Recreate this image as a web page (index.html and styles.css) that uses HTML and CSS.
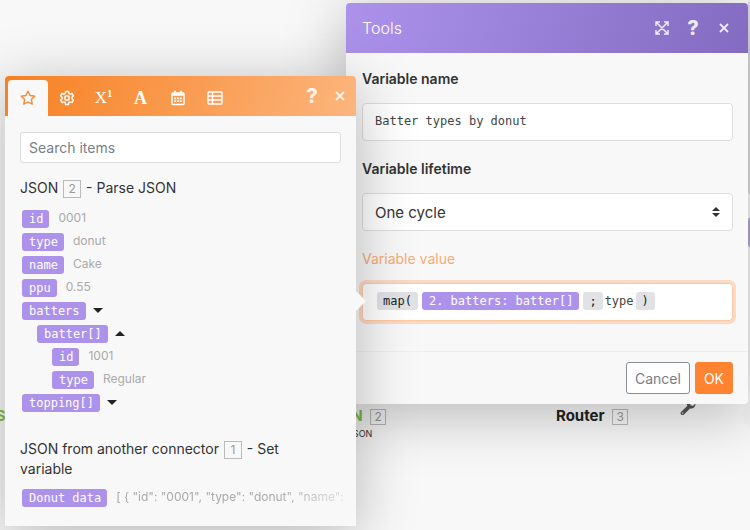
FILE: index.html
```html
<!DOCTYPE html>
<html lang="en">
  <head>
    <meta charset="UTF-8" />
    <meta name="viewport" content="width=device-width, initial-scale=1.0" />
    <title>Scenario editor</title>
    <link rel="stylesheet" href="styles.css">
  </head>

  <body>
    <main class="canvas">
      <!-- scenario modules behind the windows -->
      <div class="module module-first">
        <div class="module-name json">JS</div>
      </div>
      <div class="module module-parse">
        <div class="module-name json">JSON <span class="badge">2</span></div>
        <div class="module-sub">Parse JSON</div>
      </div>
      <div class="module module-router">
        <div class="module-name">Router <span class="badge">3</span></div>
      </div>
      <svg class="wrench" width="16" height="16" viewBox="0 0 16 16">
        <path d="M15.400 3.600l-2.500 2.300-2.400-.6-.5-2.200L12.400.7C10.500.1 8.500.7 7.500 2.300c-.7 1.200-.7 2.500-.2 3.700L1.200 11.700c-.9.9-.9 2 0 2.800s2 .8 2.800 0L10 8.600c1.400.4 2.900 0 4-1 1.200-1.100 1.700-2.600 1.400-4z" fill="#555" />
        <circle cx="2.700" cy="13" r=".8" fill="#ddd" />
      </svg>
      <div class="circle circle-top"></div>
      <div class="circle circle-tools"></div>
      <div class="circle circle-bottom"></div>

      <section class="window tools">
        <header class="tools-head">
          <h1>Tools</h1>
          <button type="button" class="icon-btn" aria-label="Expand">
            <svg width="14" height="14" viewBox="0 0 14 14" fill="none" stroke="currentColor" stroke-width="1.500">
              <path d="M1 5V1h4M9 1h4v4M13 9v4H9M5 13H1V9M1.500 1.500l11 11M12.500 1.500l-11 11" />
            </svg>
          </button>
          <button type="button" class="icon-btn help" aria-label="Help">?</button>
          <button type="button" class="icon-btn" aria-label="Close">
            <svg width="10" height="10" viewBox="0 0 10 10" stroke="currentColor" stroke-width="1.800">
              <path d="M1 1l8 8M9 1L1 9" />
            </svg>
          </button>
        </header>

        <form class="tools-body" id="tools-form">
          <div class="field">
            <label for="var-name">Variable name</label>
            <input type="text" id="var-name" class="control mono" value="Batter types by donut" />
          </div>
          <div class="field">
            <label for="var-life">Variable lifetime</label>
            <div class="select-wrap">
              <select id="var-life" class="control">
                <option>One cycle</option>
                <option>One execution</option>
              </select>
              <svg class="select-arrows" width="8" height="10" viewBox="0 0 8 10" fill="#333">
                <path d="M0 4l4-4 4 4zM0 6h8l-4 4z" />
              </svg>
            </div>
          </div>
          <div class="field active">
            <label id="value-label">Variable value</label>
            <div class="control mono expression" role="textbox" contenteditable="true" spellcheck="false" aria-labelledby="value-label"><span class="fn">map(</span><span class="pill">2. batters: batter[]</span><span class="fn">;</span><span class="plain">type</span><span class="fn">)</span></div>
          </div>
        </form>

        <footer class="tools-foot">
          <button type="button" class="btn">Cancel</button>
          <button type="submit" form="tools-form" class="btn primary">OK</button>
        </footer>
      </section>

      <section class="window picker">
        <header class="picker-head">
          <button type="button" class="tab selected" aria-label="Items">
            <svg width="16" height="16" viewBox="0 0 16 16" fill="none" stroke="currentColor" stroke-width="1.400" stroke-linejoin="round">
              <path d="M8 1.200l2.100 4.300 4.700.7-3.400 3.300.8 4.700L8 12l-4.200 2.200.8-4.700L1.200 6.200l4.700-.7z" />
            </svg>
          </button>
          <button type="button" class="tab" aria-label="General functions">
            <svg width="16" height="16" viewBox="0 0 16 16" fill="none" stroke="currentColor" stroke-width="1.500" stroke-linejoin="round">
              <path d="M6.600 1.400h2.800l.4 1.900 1.300.8 1.900-.7 1.400 2.500-1.500 1.300v1.600l1.500 1.300-1.400 2.500-1.900-.7-1.300.8-.4 1.900H6.600l-.4-1.900-1.300-.8-1.900.7-1.400-2.500 1.500-1.300V7.200L1.600 5.900 3 3.400l1.900.7 1.300-.8z" />
              <circle cx="8" cy="8" r="2.200" />
            </svg>
          </button>
          <button type="button" class="tab serif" aria-label="Math functions">X<sup>1</sup></button>
          <button type="button" class="tab serif letter" aria-label="Text functions">A</button>
          <button type="button" class="tab" aria-label="Date functions">
            <svg width="14" height="16" viewBox="0 0 14 16" fill="none" stroke="currentColor" stroke-width="1.500">
              <rect x="1" y="3" width="12" height="11.500" rx="1" />
              <path d="M1 4.500h12" stroke-width="2.500" />
              <path d="M4 .8V3M10 .8V3" stroke-width="1.800" />
              <path d="M3.200 8.300h2M6 8.300h2M8.800 8.300h2M3.200 11.200h2M6 11.200h2M8.800 11.200h2" stroke-width="1.800" />
            </svg>
          </button>
          <button type="button" class="tab" aria-label="Array functions">
            <svg width="16" height="14" viewBox="0 0 16 14" fill="none" stroke="currentColor" stroke-width="1.400">
              <rect x="1" y="1" width="14" height="12" rx="1" />
              <path d="M5.500 1v12M1 5h14M1 9h14" />
            </svg>
          </button>
          <button type="button" class="icon-btn help push" aria-label="Help">?</button>
          <button type="button" class="icon-btn" aria-label="Close">
            <svg width="10" height="10" viewBox="0 0 10 10" stroke="currentColor" stroke-width="1.800">
              <path d="M1 1l8 8M9 1L1 9" />
            </svg>
          </button>
        </header>

        <div class="picker-body">
          <input type="search" class="search" placeholder="Search items" aria-label="Search items" />

          <h2>JSON <span class="badge">2</span> - Parse JSON</h2>
          <ul class="items">
            <li><span class="pill">id</span><span class="sample">0001</span></li>
            <li><span class="pill">type</span><span class="sample">donut</span></li>
            <li><span class="pill">name</span><span class="sample">Cake</span></li>
            <li><span class="pill">ppu</span><span class="sample">0.55</span></li>
            <li><span class="pill">batters</span><span class="caret"></span></li>
            <li class="level-1"><span class="pill">batter[]</span><span class="caret up"></span></li>
            <li class="level-2"><span class="pill">id</span><span class="sample">1001</span></li>
            <li class="level-2"><span class="pill">type</span><span class="sample">Regular</span></li>
            <li><span class="pill">topping[]</span><span class="caret"></span></li>
          </ul>

          <h2 class="next">JSON from another connector <span class="badge">1</span> - Set variable</h2>
          <ul class="items">
            <li><span class="pill">Donut data</span><span class="sample fade">[ { "id": "0001", "type": "donut", "name":</span></li>
          </ul>
        </div>
      </section>
    </main>
  </body>
</html>
```

FILE: styles.css
```css
* {
  box-sizing: border-box;
}

body {
  margin: 0;
  font-family: Inter, "Liberation Sans", sans-serif;
  font-size: 14px;
  color: #333;
  background: #f8f8f8;
}

button,
input,
select {
  font: inherit;
  color: inherit;
}

.canvas {
  position: relative;
  min-height: 100vh;
  overflow: hidden;
}

.window {
  position: absolute;
  background: #f8f8f8;
  border-radius: 4px;
  box-shadow: 0 10px 60px rgba(0, 0, 0, 0.27);
}

.mono,
.pill {
  font-family: "DejaVu Sans Mono", "Liberation Mono", monospace;
  font-size: 12px;
}

.mono {
  color: #444;
}

.pill {
  flex: none;
  padding: 0 6px 0 7px;
  line-height: 18px;
  border-radius: 3px;
  color: #fff;
  background: #ac92eb;
}

.badge {
  display: inline-block;
  min-width: 18px;
  margin: 0 1px;
  padding: 0 4px;
  border: 1px solid #bbb;
  font-size: 12px;
  font-weight: 400;
  line-height: 16px;
  text-align: center;
  color: #999;
}

.icon-btn {
  display: flex;
  align-items: center;
  justify-content: center;
  width: 28px;
  height: 28px;
  padding: 0;
  border: 0;
  background: none;
  color: rgba(255, 255, 255, 0.85);
}

.help {
  font-size: 20px;
  font-weight: 800;
}

/* modules */

.module {
  position: absolute;
  top: 407px;
  white-space: nowrap;
}

.module-name {
  font-size: 15px;
  font-weight: 700;
  line-height: 18px;
  color: #222;
}

.module-name .badge {
  min-width: 16px;
  margin: 0 0 0 4px;
  padding: 0 3px;
  line-height: 14px;
}

.module .json {
  color: #82bf45;
}

.module-sub {
  font-size: 9px;
  line-height: 18px;
}

.module-first {
  left: -13px;
}

.module-parse {
  left: 321px;
}

.module-parse .module-sub {
  padding-right: 20px;
  text-align: right;
}

.module-router {
  left: 556px;
}

.wrench {
  position: absolute;
  top: 400px;
  left: 680px;
}

.circle {
  position: absolute;
  left: 748px;
  width: 60px;
  border-radius: 4px;
}

.circle-top {
  top: 0;
  height: 195px;
  background: #ddd;
}

.circle-tools {
  top: 217px;
  height: 31px;
  background: #b5a8dc;
}

.circle-bottom {
  top: 398px;
  left: 743px;
  height: 34px;
  border-radius: 17px;
  background: #f4f4f4;
}

/* tools window */

.tools {
  top: 3px;
  right: 2px;
  width: 53.6%;
}

.tools-head {
  display: flex;
  align-items: center;
  gap: 3px;
  height: 50px;
  padding: 0 10px 0 16px;
  border-radius: 4px 4px 0 0;
  background: linear-gradient(110deg, #ac92eb, #836bc1);
}

.tools-head h1 {
  margin: 0 auto 0 0;
  font-size: 16px;
  font-weight: 300;
  color: #fff;
}

.tools-body {
  padding: 16px 15px 12px 16px;
}

.field {
  margin-bottom: 18px;
}

.field label {
  display: block;
  margin-bottom: 14px;
  font-size: 14px;
  font-weight: 600;
  line-height: 20px;
}

.control {
  display: block;
  width: 100%;
  height: 38px;
  padding: 0 12px;
  border: 1px solid #ddd;
  border-radius: 4px;
  background: #fff;
}

input.control {
  padding-bottom: 3px;
}

.select-wrap {
  position: relative;
}

select.control {
  appearance: none;
  font-size: 15px;
}

.select-arrows {
  position: absolute;
  top: 14px;
  right: 13px;
  pointer-events: none;
}

.field.active label {
  font-weight: 400;
  color: #f9ac73;
}

.expression {
  display: flex;
  align-items: center;
  gap: 4px;
  padding: 0 14px 2px;
  border-color: #fcc9a4;
  box-shadow: 0 0 0 3px #fcd9c3;
  outline: none;
}

.fn {
  padding: 0 6px;
  line-height: 18px;
  border-radius: 3px;
  color: #222;
  background: #e1e2e6;
}

.plain {
  margin: 0 -2px;
}

.tools-foot {
  display: flex;
  justify-content: flex-end;
  gap: 5px;
  padding: 10px 15px;
  border-top: 1px solid #eee;
}

.btn {
  height: 32px;
  padding: 0 8px;
  border: 1px solid #868e96;
  border-radius: 3px;
  color: #777d84;
  background: #fff;
}

.btn.primary {
  border-color: #ff8331;
  color: #fff;
  background: #ff8331;
}

/* item picker */

.picker {
  top: 76px;
  left: 5px;
  width: 46.8%;
  border-radius: 4px 4px 0 0;
}

.picker::after {
  content: "";
  position: absolute;
  top: 215px;
  left: 100%;
  border: 10px solid transparent;
  border-left-color: #f8f8f8;
  border-right-width: 0;
}

.picker-head {
  display: flex;
  align-items: center;
  height: 40px;
  padding: 0 2px 0 3px;
  border-radius: 4px 4px 0 0;
  background: linear-gradient(110deg, #f78021, #fcb57d);
}

.tab {
  display: flex;
  align-items: center;
  justify-content: center;
  align-self: flex-end;
  width: 37px;
  height: 36px;
  padding: 0;
  border: 0;
  color: #fff;
  background: none;
}

.tab.selected {
  width: 40px;
  border-radius: 4px 4px 0 0;
  color: #f58a35;
  background: #f8f8f8;
}

.serif {
  font-family: "Liberation Serif", serif;
  font-size: 17px;
}

.serif sup {
  align-self: flex-start;
  margin-top: 8px;
  font-size: 10px;
  font-weight: 700;
  line-height: 12px;
}

.letter {
  font-size: 18px;
  font-weight: 700;
}

.picker-head .push {
  margin-left: auto;
}

.picker-body {
  padding: 16px 15px 17px;
}

.search {
  display: block;
  width: 100%;
  height: 31px;
  padding: 0 8px;
  border: 1px solid #ddd;
  border-radius: 3px;
  background: #fff;
}

.search::placeholder {
  color: #7a8087;
}

.picker-body h2 {
  margin: 15px 0 9px;
  padding-right: 15px;
  font-size: 14px;
  font-weight: 400;
  line-height: 20px;
}

.picker-body h2.next {
  margin: 25px 0 7px;
}

.items {
  margin: 0;
  padding: 0 0 0 2px;
  list-style: none;
}

.items li {
  display: flex;
  align-items: center;
  gap: 9px;
  height: 23px;
}

.items .level-1 {
  padding-left: 15px;
}

.items .level-2 {
  padding-left: 30px;
}

.sample {
  padding-bottom: 3px;
  font-size: 12px;
  color: #aaa;
  white-space: nowrap;
}

.fade {
  mask-image: linear-gradient(to right, #000 70%, rgba(0, 0, 0, 0.3));
}

.caret {
  margin-left: -2px;
  border: 5px solid transparent;
  border-top-color: #222;
  border-bottom-width: 0;
}

.caret.up {
  border-top-width: 0;
  border-bottom: 5px solid #222;
}
```
